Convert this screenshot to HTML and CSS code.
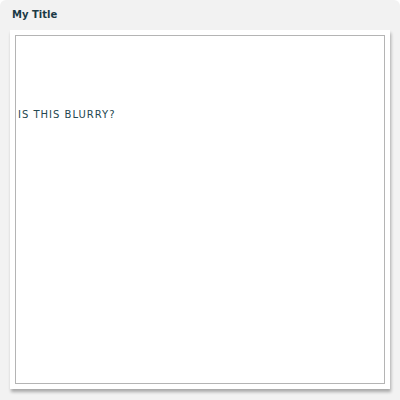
FILE: index.html
```html
<!DOCTYPE html>
<html>
<head>
<meta charset="utf-8">
<link rel="stylesheet" href="styles.css">
</head>
<body>
<div class="panel">
  <div class="title">My Title</div>
  <div class="card">
    <div class="inner">
      <div class="msg">IS THIS BLURRY?</div>
    </div>
  </div>
</div>
</body>
</html>
```
FILE: styles.css
```css
html, body { margin: 0; padding: 0; background: #ffffff; }
.panel {
  width: 400px;
  height: 400px;
  box-sizing: border-box;
  background: #f2f2f2;
  border-radius: 6px 6px 0 0;
  padding: 8px 10px 0 10px;
  font-family: "DejaVu Sans", Verdana, sans-serif;
}
.title {
  font-size: 10px;
  font-weight: bold;
  color: #1b3a46;
  height: 22px;
  line-height: 14px;
  padding-left: 2px;
}
.card {
  background: #ffffff;
  padding: 5px;
  height: 359px;
  box-sizing: border-box;
  box-shadow: 1px 3px 3px rgba(0,0,0,0.3);
}
.inner {
  height: 100%;
  box-sizing: border-box;
  border: 1px solid #b4b4b4;
  padding: 72px 2px 0 2px;
}
.msg {
  font-size: 10px;
  letter-spacing: 1px;
  color: #24474f;
  line-height: 14px;
}
```
